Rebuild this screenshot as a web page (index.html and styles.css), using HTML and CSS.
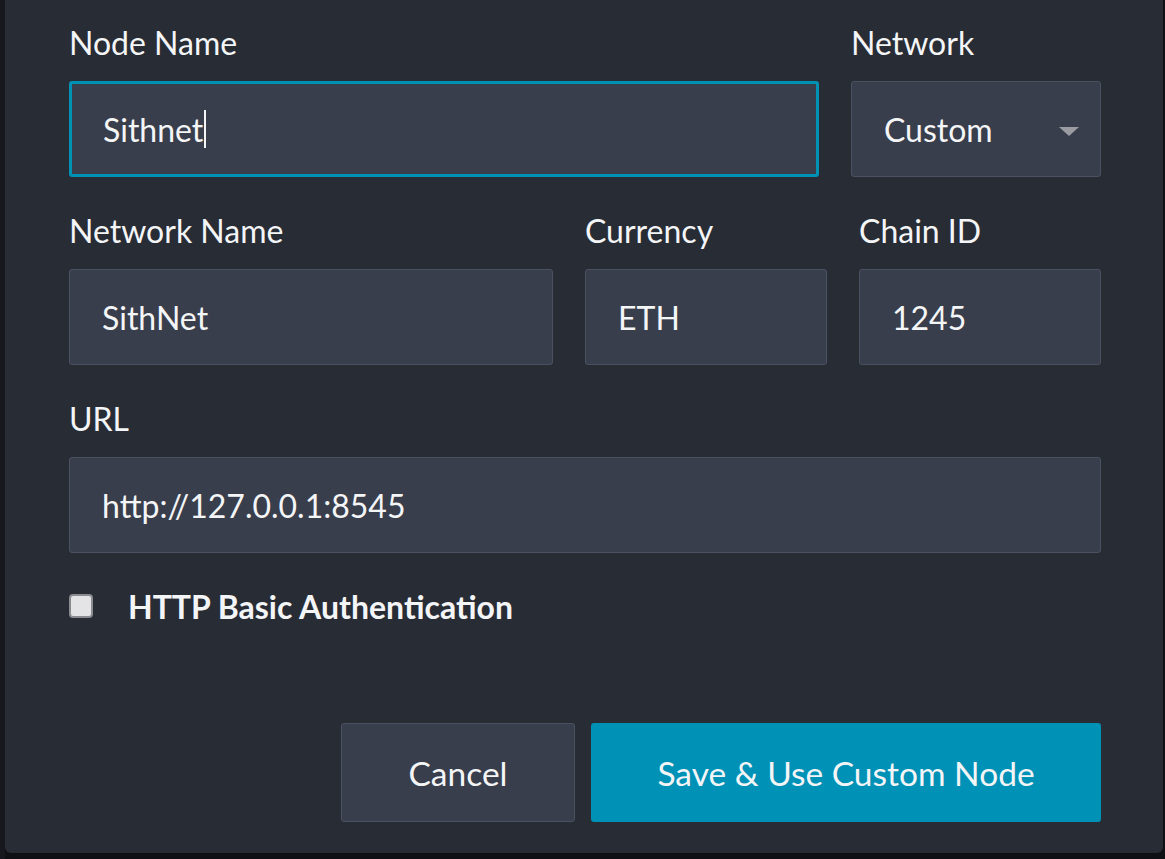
FILE: index.html
```html
<!DOCTYPE html>
<html lang="en">
<head>
<meta charset="utf-8">
<title>Custom Node</title>
<link rel="stylesheet" href="styles.css">
</head>
<body>
<div class="backdrop">
  <div class="modal">
    <div class="row row-1">
      <div class="field">
        <div class="label">Node Name</div>
        <div class="box focused"><span class="value">Sithnet</span><span class="caret"></span></div>
      </div>
      <div class="field">
        <div class="label">Network</div>
        <div class="box select"><span class="value">Custom</span><span class="arrow"></span></div>
      </div>
    </div>
    <div class="row row-2">
      <div class="field">
        <div class="label">Network Name</div>
        <div class="box"><span class="value">SithNet</span></div>
      </div>
      <div class="field">
        <div class="label">Currency</div>
        <div class="box"><span class="value">ETH</span></div>
      </div>
      <div class="field">
        <div class="label">Chain ID</div>
        <div class="box"><span class="value">1245</span></div>
      </div>
    </div>
    <div class="row row-3">
      <div class="field">
        <div class="label">URL</div>
        <div class="box"><span class="value">http://127.0.0.1:8545</span></div>
      </div>
    </div>
    <label class="check-row">
      <span class="checkbox"></span>
      <span class="check-label">HTTP Basic Authentication</span>
    </label>
    <div class="actions">
      <button class="btn btn-cancel">Cancel</button>
      <button class="btn btn-primary">Save &amp; Use Custom Node</button>
    </div>
  </div>
</div>
</body>
</html>
```
FILE: styles.css
```css
* { box-sizing: border-box; }
html, body {
  margin: 0;
  padding: 0;
  background: #0e1014;
  font-family: Lato, "Open Sans", sans-serif;
  color: #f4f5f7;
}
.backdrop {
  width: 1165px;
  height: 859px;
  padding: 0 2px 6px 5px;
  background: linear-gradient(to right, #16181d 0 5px, #0e1014 5px);
}
.modal {
  width: 1158px;
  height: 853px;
  background: #282c35;
  border-radius: 0 0 6px 6px;
  padding: 25px 62px 31px 64px;
  display: flex;
  flex-direction: column;
}
.row {
  display: grid;
  column-gap: 32px;
  margin-bottom: 36px;
}
.row-1 { grid-template-columns: 750px 250px; }
.row-2 { grid-template-columns: 484px 242px 242px; }
.row-3 { grid-template-columns: 1032px; margin-bottom: 0; }
.label {
  font-size: 32px;
  line-height: 36px;
  height: 36px;
  margin-bottom: 20px;
}
.box {
  height: 96px;
  background: #393e4c;
  border: 1px solid #4b5161;
  border-radius: 3px;
  padding: 0 32px;
  display: flex;
  align-items: center;
  font-size: 32px;
  position: relative;
}
.box.focused {
  border: 3px solid #0092b5;
  padding-left: 31px;
}
.caret {
  display: inline-block;
  width: 2px;
  height: 38px;
  background: #f4f5f7;
  margin-left: 1px;
}
.select { justify-content: space-between; padding-right: 21px; }
.arrow {
  width: 0;
  height: 0;
  margin-top: 4px;
  border-left: 10px solid transparent;
  border-right: 10px solid transparent;
  border-top: 9px solid #9a9ca2;
}
.check-row {
  display: flex;
  align-items: center;
  margin-top: 41px;
  height: 24px;
}
.checkbox {
  width: 24px;
  height: 24px;
  border: 2px solid #8a8c91;
  border-radius: 4px;
  background: #e4e4e6;
  flex: none;
}
.check-label {
  margin-left: 35px;
  font-size: 32px;
  font-weight: 700;
}
.actions {
  margin-top: auto;
  display: flex;
  justify-content: flex-end;
  gap: 16px;
}
.btn {
  height: 99px;
  border-radius: 3px;
  font-family: Lato, "Open Sans", sans-serif;
  font-size: 33.5px;
  color: #f4f5f7;
  cursor: pointer;
}
.btn-cancel {
  width: 234px;
  background: #393e4c;
  border: 1px solid #4b5161;
}
.btn-primary {
  width: 510px;
  background: #0091b6;
  border: none;
}
```
